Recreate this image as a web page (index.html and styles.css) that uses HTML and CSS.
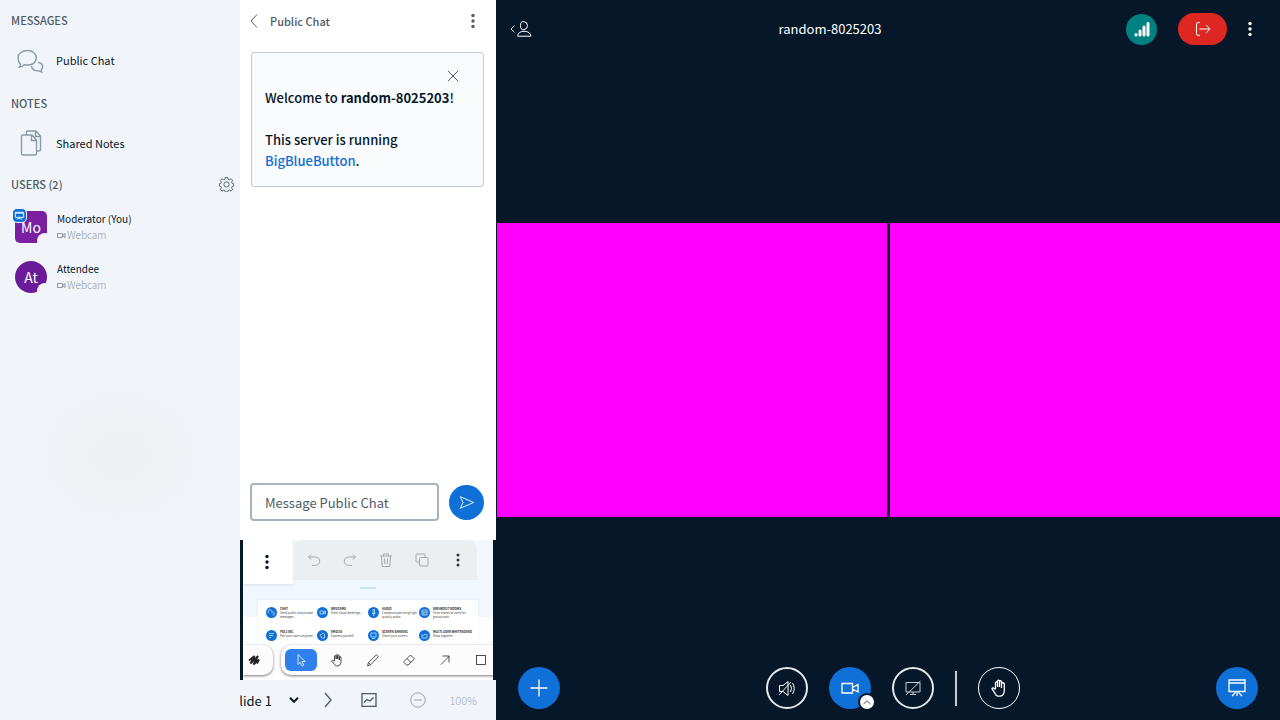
FILE: index.html
```html
<!DOCTYPE html>
<html lang="en">
<head>
<meta charset="utf-8">
<meta name="viewport" content="width=device-width, initial-scale=1">
<title>random-8025203</title>
<link rel="stylesheet" href="styles.css">
</head>
<body>
<div class="app">
  <aside class="sidebar">
    <h2 class="side-title">Messages</h2>
    <button class="side-item" type="button">
      <svg class="side-icon" viewBox="0 0 28 28"><path d="M4.600 18.300c-.2 1-.6 1.800-1.500 2.800 2.300-.2 4-.9 5.200-2.300 8 1.200 11.900-2.200 11.900-7 0-4.200-3.700-7.300-8.800-7.300S2 7.300 2 11.700c0 2.400.6 4.700 2.600 6.600zM22 16.500c3.300.3 4.600 2.200 4.600 4.300 0 1.300-.5 2.200-1.300 2.900 0 .9.100 1.600.5 2.300-1.300 0-2-.4-2.800-1.200-4.200.6-7-1.300-7.500-5"/></svg>
      <span>Public Chat</span>
    </button>
    <h2 class="side-title">Notes</h2>
    <button class="side-item" type="button">
      <svg class="side-icon" viewBox="0 0 28 28"><path d="M6.500 6h9.500l4.500 5v13.500q0 1.500-1.500 1.500h-12q-1.500 0-1.500-1.500V7q0-1 1-1zM15.500 6v5.500h5M10.500 5.500V3q0-1 1-1H20l4.500 5v13.500q0 1.500-1.500 1.500H21M19.500 2v5.500h5"/></svg>
      <span>Shared Notes</span>
    </button>
    <div class="users-head">
      <h2 class="side-title">Users (2)</h2>
      <button class="icon-btn" type="button" aria-label="Manage users">
        <svg class="gear" viewBox="0 0 16 16"><path d="M6.700 1h2.600l.4 2 1.300.6 1.800-1.200 1.800 1.800-1.200 1.800.6 1.300 1.500.4v2.600l-1.500.4-.6 1.300 1.200 1.800-1.800 1.800-1.800-1.200-1.300.6-.4 1.500H6.700l-.4-1.500-1.300-.6-1.800 1.200-1.800-1.800 1.200-1.800-.6-1.300-1.500-.4V7.700l1.500-.4.600-1.300-1.200-1.800 1.800-1.800L5 3.600 6.300 3z"/><circle cx="8" cy="8.500" r="2.800"/></svg>
      </button>
    </div>
    <ul class="users">
      <li class="user">
        <span class="avatar moderator">Mo
          <span class="presenter"><svg viewBox="0 0 12 12"><path d="M1.500 2.500h9v5.500h-9zM1.500 3.500h9M6 8v2M3.500 10.500L5 8.500M8.500 10.500L7 8.500"/></svg></span>
        </span>
        <span class="who"><span class="name">Moderator (You)</span><span class="sub"><svg viewBox="0 0 9 7"><path d="M.5 1.500h5v4h-5zM5.500 3.500l2.500-2v4z"/></svg>Webcam</span></span>
      </li>
      <li class="user">
        <span class="avatar">At</span>
        <span class="who"><span class="name">Attendee</span><span class="sub"><svg viewBox="0 0 9 7"><path d="M.5 1.500h5v4h-5zM5.500 3.500l2.500-2v4z"/></svg>Webcam</span></span>
      </li>
    </ul>
  </aside>

  <div class="middle">
    <section class="chat">
      <header class="chat-head">
        <button class="chat-back" type="button"><svg viewBox="0 0 8 14"><path d="M7 .5L1 7l6 6.500"/></svg>Public Chat</button>
        <button class="icon-btn" type="button" aria-label="Chat options"><svg class="dots" viewBox="0 0 4 16"><circle cx="2" cy="2.500" r="1.700"/><circle cx="2" cy="8" r="1.700"/><circle cx="2" cy="13.500" r="1.700"/></svg></button>
      </header>
      <div class="welcome">
        <button class="close" type="button" aria-label="Close"><svg viewBox="0 0 12 12"><path d="M1 1l10 10M11 1L1 11"/></svg></button>
        <p>Welcome to <b>random-8025203</b>!</p>
        <p>This server is running <a href="#">BigBlueButton</a>.</p>
      </div>
      <form class="composer">
        <input type="text" placeholder="Message Public Chat" aria-label="Message Public Chat">
        <button type="button" class="send" aria-label="Send message"><svg viewBox="0 0 18 16"><path d="M1.500 1.500L16.500 8l-15 6.500L4.500 8z"/></svg></button>
      </form>
    </section>

    <section class="board">
      <div class="board-top">
        <button class="board-menu" type="button" aria-label="Presentation options"><svg class="dots" viewBox="0 0 4 16"><circle cx="2" cy="2.500" r="1.700"/><circle cx="2" cy="8" r="1.700"/><circle cx="2" cy="13.500" r="1.700"/></svg></button>
        <div class="actions">
          <button type="button" aria-label="Undo"><svg viewBox="0 0 14 14"><path d="M4 1.500L1.500 4 4 6.500M1.500 4H8.500a4.200 4.200 0 0 1 0 8.400H5"/></svg></button>
          <button type="button" aria-label="Redo"><svg viewBox="0 0 14 14"><path d="M10 1.500L12.500 4 10 6.500M12.500 4H5.500a4.200 4.200 0 0 0 0 8.400H9"/></svg></button>
          <button type="button" aria-label="Delete"><svg viewBox="0 0 14 14"><path d="M1 3h12M4.500 3V1h5v2M2.500 3l.7 10.500h7.600L11.500 3M5.500 5.500l.3 5.500M8.500 5.500L8.200 11"/></svg></button>
          <button type="button" aria-label="Duplicate"><svg viewBox="0 0 14 14"><path d="M10 4V2q0-1-1-1H2Q1 1 1 2v6q0 1 1 1h2.500M5.500 4.500H12q1 0 1 1V12q0 1-1 1H5.500q-1 0-1-1V5.500q0-1 1-1z"/></svg></button>
          <button type="button" class="more" aria-label="More"><svg viewBox="0 0 14 14"><circle cx="7" cy="2" r="1"/><circle cx="7" cy="7" r="1"/><circle cx="7" cy="12" r="1"/></svg></button>
        </div>
      </div>
      <div class="handle"></div>
      <div class="slide">
        <div class="feature"><i><svg viewBox="0 0 11 11"><path d="M3 6.500a2 2 0 1 1 3-1.500M5.500 6a1.500 1.500 0 1 1 1 2"/></svg></i><p><b>CHAT</b>Send public and private messages.</p></div>
        <div class="feature"><i><svg viewBox="0 0 11 11"><path d="M3 4h3.500v3H3zM6.500 5.500L8.500 4v3z"/></svg></i><p><b>WEBCAMS</b>Hold visual meetings.</p></div>
        <div class="feature"><i><svg viewBox="0 0 11 11"><path d="M5 2.500h1.500v4H5zM4 6q1.700 3 3.500 0M5.700 7.500V9"/></svg></i><p><b>AUDIO</b>Communicate using high quality audio.</p></div>
        <div class="feature"><i><svg viewBox="0 0 11 11"><path d="M3 3h5v5H3zM3 5h5M5 5v3"/></svg></i><p><b>BREAKOUT ROOMS</b>Form teams of users for group work.</p></div>
        <div class="feature"><i><svg viewBox="0 0 11 11"><path d="M3 3.500h5M3 5.500h4M3 7.500h2"/></svg></i><p><b>POLLING</b>Poll your users anytime.</p></div>
        <div class="feature"><i><svg viewBox="0 0 11 11"><path d="M3.500 5l1 3h3V4L6 3 4.500 4z"/></svg></i><p><b>EMOJIS</b>Express yourself.</p></div>
        <div class="feature"><i><svg viewBox="0 0 11 11"><path d="M3 3h5v4H3zM4 8.500h3"/></svg></i><p><b>SCREEN SHARING</b>Share your screen.</p></div>
        <div class="feature"><i><svg viewBox="0 0 11 11"><path d="M3 4v4h5V4M4 6l2-2 1 1"/></svg></i><p><b>MULTI-USER WHITEBOARD</b>Draw together.</p></div>
      </div>
      <div class="tools">
        <div class="tool-group style-group"><button type="button" aria-label="Styles"><svg viewBox="0 0 14 14"><path class="scribble" d="M2 7.500L7.500 3 3.500 10.500 11 3 6.500 11.500 12 6.500 10 10.500"/></svg></button></div>
        <div class="tool-group">
          <button type="button" class="selected" aria-label="Select"><svg viewBox="0 0 14 14"><path d="M4 1.500v10L6.300 9.300 8 13l1.800-.9L8 8.600h3.200z"/></svg></button>
          <button type="button" aria-label="Hand"><svg viewBox="0 0 14 14"><path d="M4.500 8V3q.8-1.200 1.600 0v3V2q.8-1.200 1.600 0v4V2.500q.8-1 1.600 0V7 4q.8-1 1.700 0v5.500q-.5 3-3 3.500H6.500Q5 12.500 1.500 8q.3-1.400 3 0"/></svg></button>
          <button type="button" aria-label="Draw"><svg viewBox="0 0 14 14"><path d="M1.500 12.800l1-3.300 8-7.700 1.900 1.900-7.700 8zM2.500 9.500l2.200 2.200"/></svg></button>
          <button type="button" aria-label="Eraser"><svg viewBox="0 0 14 14"><path d="M2 8.500L8.500 2 12.500 6 6 12H4.500L2 9.500zM5 5.500l4 4"/></svg></button>
          <button type="button" aria-label="Arrow"><svg viewBox="0 0 14 14"><path d="M3 11.500l8-8M4.500 3H11v6.500"/></svg></button>
          <button type="button" aria-label="Rectangle"><svg viewBox="0 0 14 14"><rect x="2.500" y="2.500" width="9" height="9"/></svg></button>
        </div>
      </div>
    </section>

    <footer class="slide-nav">
      <div class="picker">
        <select aria-label="Slide"><option>Slide 1</option></select>
        <svg viewBox="0 0 10 6"><path d="M1 .8l4 4 4-4"/></svg>
      </div>
      <button class="next" type="button" aria-label="Next slide"><svg viewBox="0 0 8 16"><path d="M1 1l6 7-6 7"/></svg></button>
      <button class="stats" type="button" aria-label="Quick poll"><svg viewBox="0 0 16 14"><path d="M1 .7h14v12.600H1zM3 9.500l3-3 3 1.500 3.500-3.500"/></svg></button>
      <button class="zoom-out" type="button" aria-label="Zoom out"><svg viewBox="0 0 16 16"><circle cx="8" cy="8" r="7.200"/><path d="M4 8h8"/></svg></button>
      <span class="zoom-level">100%</span>
    </footer>
  </div>

  <main class="stage">
    <header class="nav">
      <button class="people" type="button" aria-label="Users and messages"><svg viewBox="0 0 24 16"><path class="thin" d="M4.500 4.500L1 8l3.500 3.500"/><path d="M14 .8q3.500 0 3.500 3.700T14 8.700t-3.500-4.200T14 .8zM7.700 15.200q0-4.500 6.300-5 6.800.5 6.800 5z"/></svg></button>
      <h1>random-8025203</h1>
      <button class="signal" type="button" aria-label="Connection status"><svg viewBox="0 0 16 16"><path d="M2 13.500v.5M6 10v4M10 6v8M14 2.500V14"/></svg></button>
      <button class="leave" type="button" aria-label="Leave meeting"><svg viewBox="0 0 16 14"><path d="M5 .6H3q-1.500 0-1.500 1.400v10q0 1.400 1.500 1.400h2M4.500 7h10.500M11 3l4 4-4 4"/></svg></button>
      <button class="nav-more" type="button" aria-label="Options"><svg class="dots" viewBox="0 0 4 16"><circle cx="2" cy="2.500" r="1.700"/><circle cx="2" cy="8" r="1.700"/><circle cx="2" cy="13.500" r="1.700"/></svg></button>
    </header>
    <div class="videos-wrap"><div class="videos"><div class="video"></div><div class="video"></div></div></div>
    <footer class="controls">
      <button class="round blue" type="button" aria-label="Actions"><svg viewBox="0 0 18 18"><path class="bold" d="M9 .5v17M.5 9h17"/></svg></button>
      <div class="media">
        <button class="round ring" type="button" aria-label="Audio"><svg viewBox="0 0 18 18"><path d="M1.500 6.500h3.500l5-4v14l-5-4H1.500zM1 16L13 3M12.500 6q2 3.500 0 7M14.500 4q3.500 5.500 0 11"/></svg></button>
        <div class="cam">
          <button class="round blue" type="button" aria-label="Stop webcam"><svg viewBox="0 0 18 18"><path class="bold" d="M1 4.500h10.500v9.500H1zM11.500 8.500L17 5.500v7.500l-5.500-3"/></svg></button>
          <button class="cam-more" type="button" aria-label="Webcam settings"><svg viewBox="0 0 8 5"><path d="M.5 4L4 .8 7.500 4"/></svg></button>
        </div>
        <button class="round ring" type="button" aria-label="Share screen"><svg class="dim" viewBox="0 0 18 18"><path d="M2 3.500h14v9.500H2zM6 15.500h6M9 13v2.500M2 16L16.500 2"/></svg></button>
        <span class="divider"></span>
        <button class="round ring thin-ring" type="button" aria-label="Raise hand"><svg viewBox="0 0 18 18"><path class="bold" d="M5.500 10V3.700q1-1.500 2 0V8 2q1-1.500 2 0v6V2.500q1-1.500 2 0V9 4.500q1-1.500 2.800 0V12q-.3 4.500-4 5.200H8Q6 17 4.500 13.500L2 9.800q.7-2 3.500.7"/></svg></button>
      </div>
      <button class="round blue" type="button" aria-label="Presentation"><svg viewBox="0 0 18 18"><path class="bold" d="M1 1h16v11.500H1zM1 4h16M9 12.500V17M7.500 13.500L4 17M10.500 13.500L14 17"/></svg></button>
    </footer>
  </main>
</div>
</body>
</html>
```

FILE: styles.css
```css
* { box-sizing: border-box; }
body {
  margin: 0;
  background: #06172a;
  color: #06172a;
  font-family: "Noto Sans CJK SC", "Noto Sans", sans-serif;
  font-size: 11px;
}
button, input, select { font: inherit; color: inherit; }
button {
  display: flex;
  align-items: center;
  justify-content: center;
  padding: 0;
  border: 0;
  background: none;
  cursor: pointer;
}
svg { display: block; fill: none; stroke: currentColor; flex: none; }
h1, h2, p, ul { margin: 0; padding: 0; }
.app { display: grid; grid-template-columns: 240px 256px 1fr; min-height: 100vh; }
.dots { width: 4px; height: 16px; fill: currentColor; stroke: none; }

/* user list */
.sidebar {
  padding-top: 12px;
  background: radial-gradient(ellipse 120px 100px at 120px 455px, #edf0f3, #f1f5f9);
}
.side-title {
  padding-left: 11px;
  color: #4e5a66;
  font-size: 11px;
  font-weight: 500;
  line-height: 16px;
  text-transform: uppercase;
}
.side-item { gap: 12px; height: 64px; padding-left: 16px; }
.side-item + .side-title { margin-top: 3px; }
.side-icon { width: 28px; height: 28px; color: #8b9aa8; stroke-width: 1.400; }
.users-head { display: flex; align-items: center; justify-content: space-between; padding: 1px 6px 0 0; margin-bottom: 19px; }
.gear { width: 15px; height: 16px; color: #4e5a66; }
.users { list-style: none; }
.user { display: flex; gap: 10px; height: 50px; padding-left: 15px; }
.avatar {
  position: relative;
  width: 32px;
  height: 32px;
  border-radius: 50%;
  background: #6a1b9a;
  color: #fff;
  font-size: 14px;
  line-height: 32px;
  text-align: center;
}
.avatar::after {
  content: "";
  position: absolute;
  right: -6px;
  bottom: -6px;
  width: 16px;
  height: 16px;
  border-radius: 50%;
  background: #f1f5f9;
}
.avatar.moderator { border-radius: 5px; background: #7b1fa2; }
.presenter {
  position: absolute;
  left: -3px;
  top: -3px;
  display: flex;
  align-items: center;
  justify-content: center;
  width: 15px;
  height: 15px;
  border: 1px solid #f1f5f9;
  border-radius: 5px;
  background: #0f70d7;
}
.presenter svg { width: 11px; height: 11px; }
.who { display: flex; flex-direction: column; line-height: 16px; font-size: 10px; }
.sub { display: flex; align-items: center; gap: 1px; color: #8f98a1; font-weight: 300; }
.sub svg { width: 9px; height: 7px; }

/* chat */
.middle { display: flex; flex-direction: column; min-width: 0; }
.chat { display: flex; flex: 1; flex-direction: column; padding: 11px 12px 19px 10px; background: #fff; }
.chat-head { display: flex; align-items: center; justify-content: space-between; height: 20px; padding-right: 9px; color: #4e5a66; }
.chat-back { gap: 12px; font-weight: 500; }
.chat-back svg { width: 8px; height: 14px; }
.welcome {
  margin: 21px 0 0 1px;
  padding: 14px 13px;
  border: 1px solid #c2cad2;
  border-radius: 3px;
  background: #fafbfd;
  font-size: 13px;
  font-weight: 500;
  line-height: 21px;
}
.welcome p + p { margin-top: 21px; }
.welcome .close { margin: 3px 11px 5px auto; color: #4e5a66; }
.welcome p:last-child { margin-bottom: 1px; }
.close svg { width: 12px; height: 12px; }
.welcome a { color: #0f70d7; text-decoration: none; }
.composer { display: flex; align-items: center; gap: 10px; margin-top: auto; }
.composer input {
  flex: 1;
  min-width: 0;
  height: 38px;
  padding: 0 13px;
  border: 2px solid #a7b3bd;
  border-radius: 4px;
  background: #fff;
  font-size: 13px;
  outline: 0;
}
.composer input::placeholder { color: #4e5a66; opacity: 1; }
.send { width: 35px; height: 35px; border-radius: 50%; background: #0f70d7; color: #fff; }
.send svg { width: 16px; height: 15px; }

/* whiteboard */
.board {
  display: flex;
  flex-direction: column;
  height: 140px;
  margin: 0 3px;
  overflow: hidden;
  background: linear-gradient(#f0f7ff 77px, #fff 77px);
}
.board-top { display: flex; height: 44px; }
.board-menu { width: 50px; padding-right: 2px; background: #fff; box-shadow: 0 1px 3px #d5dde5; }
.actions { display: flex; align-items: center; width: 184px; height: 40px; padding: 0 1px 0 3px; border-radius: 9px 9px 0 0; background: #eceff1; box-shadow: 0 1px 1px #f8fafb; color: #a4a8ac; }
.actions button { flex: 1; }
.actions svg, .tools svg { width: 14px; height: 14px; }
.actions .more { color: #333; }
.more svg { fill: currentColor; stroke: none; }
.more circle { r: 1.500px; }
.handle { align-self: center; width: 16px; height: 2px; margin-top: 3px; border-radius: 1px; background: #cbe1f5; }
.slide {
  display: grid;
  grid-template-columns: repeat(4, 51px);
  grid-auto-rows: 23px;
  align-self: center;
  width: 220px;
  height: 50px;
  flex: none;
  margin-top: 11px;
  padding: 7px 8px 0;
  background: #fff;
  box-shadow: 0 0 2px #e3eaf0;
}
.feature { display: flex; gap: 3px; width: 51px; }
.feature i { width: 11px; height: 11px; flex: none; border-radius: 50%; background: #0f70d7; color: #fff; }
.feature svg { width: 11px; height: 11px; stroke-width: 0.600; }
.feature p { color: #444; font-size: 3px; line-height: 4px; }
.feature b { display: block; color: #222; white-space: nowrap; }
.tools { position: relative; display: flex; gap: 8px; margin-top: -5px; }
.tool-group { display: flex; flex: none; align-items: center; height: 30px; padding: 0 4px; border-radius: 10px; background: #fcfcfc; box-shadow: 0 1px 3px #777; color: #222; }
.tool-group button { width: 32px; height: 22px; margin-right: 4px; }
.tool-group svg { stroke-width: 0.800; }
.tool-group .selected { border-radius: 6px; background: #2f80ed; color: #fff; }
.style-group { width: 30px; justify-content: center; padding: 0 9px 0 0; border-radius: 0 10px 10px 0; }
.style-group button { width: 20px; margin: 0; }
.scribble { stroke-width: 1.800; }
.slide-nav { display: flex; align-items: center; justify-content: flex-end; height: 40px; padding-right: 19px; overflow: hidden; background: #f1f5f9; color: #4e5a66; }
.picker { display: flex; align-items: center; color: #06172a; }
.picker select { width: 58px; padding: 0; border: 0; appearance: none; background: none; font-size: 13px; }
.picker svg { width: 10px; height: 6px; stroke-width: 2; }
.next { margin-left: 25px; }
.next svg { width: 8px; height: 16px; stroke-width: 1.300; }
.stats { margin-left: 29px; }
.stats svg { width: 16px; height: 14px; stroke-width: 1.300; }
.zoom-out { margin-left: 33px; color: #9aa3ac; }
.zoom-out svg { width: 16px; height: 16px; }
.zoom-level { margin-left: 23px; color: #a7afb7; font-weight: 300; }

/* meeting area */
.stage { display: flex; flex-direction: column; min-width: 0; background: #06172a; color: #fff; }
.nav { display: flex; align-items: center; height: 58px; padding: 0 28px 0 14px; }
.people svg { width: 24px; height: 16px; }
.thin { stroke-width: 0.800; }
.nav h1 { flex: 1; padding-bottom: 2px; font-size: 13px; font-weight: 400; text-align: center; }
.signal { width: 31px; height: 31px; border-radius: 50%; background: #008081; }
.signal svg { width: 16px; height: 16px; stroke-width: 3; stroke-linecap: round; }
.leave { width: 49px; height: 32px; margin: 0 21px; border-radius: 16px; background: #df2721; }
.leave svg { width: 16px; height: 14px; }
.videos-wrap { display: flex; flex: 1; align-items: center; padding: 26px 0 0 1px; }
.videos { display: grid; flex: 1; grid-template-columns: 1fr 1fr; gap: 3px; }
.video { aspect-ratio: 390 / 294; background: #f0f; }
.controls { display: flex; align-items: center; justify-content: space-between; height: 64px; padding: 0 22px; }
.round { width: 42px; height: 42px; border-radius: 50%; }
.round svg { width: 18px; height: 18px; }
.bold { stroke-width: 1.300; }
.dim { color: #c6ccd3; }
.blue { background: #0f70d7; }
.ring { border: 2px solid #e4e8ec; }
.thin-ring { border: 1px solid #fff; }
.media { display: flex; align-items: center; gap: 21px; margin-left: 10px; }
.divider { width: 2px; height: 35px; background: #c6ccd3; }
.cam { position: relative; }
.cam-more {
  position: absolute;
  right: -5px;
  bottom: -2px;
  width: 18px;
  height: 18px;
  border: 2px solid #06172a;
  border-radius: 50%;
  background: #fff;
  color: #4e5a66;
}
.cam-more svg { width: 8px; height: 5px; }
```
